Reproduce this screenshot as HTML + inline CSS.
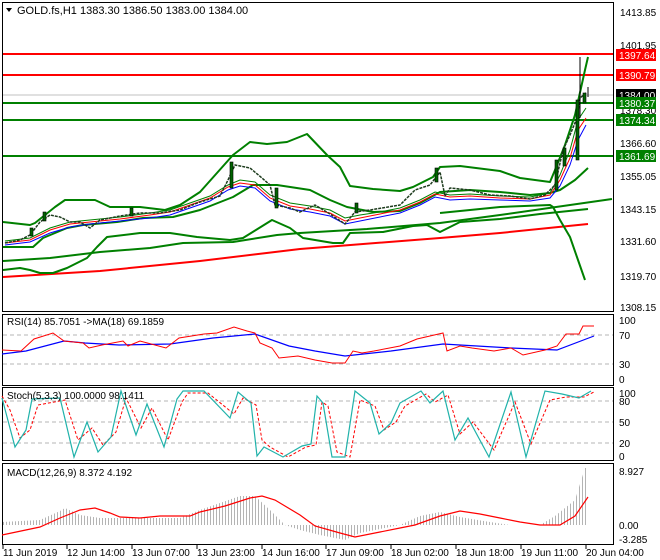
<!DOCTYPE html>
<html><head><meta charset="utf-8"><style>
html,body{margin:0;padding:0;background:#fff;}
svg{display:block;font-family:"Liberation Sans",sans-serif;}
</style></head><body>
<svg width="660" height="560" viewBox="0 0 660 560" xmlns="http://www.w3.org/2000/svg">
<defs>
<pattern id="hist" width="3" height="10" patternUnits="userSpaceOnUse"><rect x="0" y="0" width="1" height="10" fill="#b4b4b4"/></pattern>
</defs>
<rect width="660" height="560" fill="#fff"/>
<g fill="none" stroke="#000" stroke-width="1">
<rect x="2.5" y="2.5" width="611" height="309"/>
<rect x="2.5" y="314.5" width="611" height="71"/>
<rect x="2.5" y="387.5" width="611" height="73"/>
<rect x="2.5" y="463.5" width="611" height="81"/>
</g>
<line x1="3" y1="95" x2="613" y2="95" stroke="#c0c0c0" stroke-width="1"/>
<line x1="3" y1="54" x2="613" y2="54" stroke="#f00" stroke-width="2"/>
<line x1="3" y1="75" x2="613" y2="75" stroke="#f00" stroke-width="2"/>
<line x1="3" y1="103" x2="613" y2="103" stroke="#008000" stroke-width="2"/>
<line x1="3" y1="120" x2="613" y2="120" stroke="#008000" stroke-width="2"/>
<line x1="3" y1="156" x2="613" y2="156" stroke="#008000" stroke-width="2"/>
<g fill="none" stroke-width="2" stroke-linejoin="round">
<polyline stroke="#f00" points="3,277 100,271 200,261 300,249 440,238 500,233 588,224"/>
<polyline stroke="#008000" points="3,222 30,225 35,223 55,207 65,200 95,200 110,207 140,207 165,210 180,205 200,192 233,155 250,142 267,144 287,142 307,134 327,155 340,167 350,186 373,189 400,191 413,187 433,177 440,167 460,166 500,171 520,178 550,182 555,170 565,145 575,115 585,70 588,57"/>
<polyline stroke="#008000" points="3,247 33,247 43,238 67,228 83,225 117,222 143,218 173,217 200,210 233,197 253,185 277,185 310,190 330,200 347,207 373,212 400,211 420,203 440,192 470,190 500,192 530,195 550,193 560,190 575,180 588,168"/>
<polyline stroke="#008000" points="3,261 50,258 100,252 150,248 183,243 233,242 277,235 300,233 367,229 440,223 500,215 612,199"/>
<polyline stroke="#008000" points="3,270 20,268 30,270 40,273 53,273 67,268 87,258 97,247 107,237 140,233 170,233 197,237 230,240 243,238 272,220 290,228 303,238 333,243 343,243 350,233 383,232 413,226 427,225 440,232 460,222 500,219 540,214 588,209"/>
<polyline stroke="#008000" points="440,213 500,207 550,205 553,207 560,220 570,237 578,260 585,280"/>
</g>
<g fill="none" stroke-width="1">
<polyline stroke="#008000" points="5,241 30,238 50,228 70,222 90,220 120,217 150,213 170,210 190,203 210,196 228,185 240,180 255,182 270,195 290,203 310,206 330,210 345,218 360,215 380,212 400,208 420,200 435,192 450,195 470,194 500,196 530,197 550,193 560,175 570,150 578,120 586,108"/>
<polyline stroke="#f00" points="5,243 30,240 50,230 70,224 90,222 120,219 150,215 170,212 190,205 210,198 228,187 240,183 255,185 270,198 290,206 310,209 330,213 345,221 360,218 380,214 400,210 420,202 435,194 450,197 470,196 500,198 530,199 550,195 560,180 570,158 578,130 586,118"/>
<polyline stroke="#00f" points="5,245 30,242 50,233 70,227 90,224 120,221 150,218 170,215 190,208 210,201 228,190 240,186 255,188 270,201 290,209 310,212 330,216 345,224 360,221 380,217 400,213 420,205 435,197 450,200 470,199 500,200 530,201 550,198 560,186 570,165 578,140 586,125"/>
</g>
<polyline fill="none" stroke="#1e3c1e" stroke-width="1.5" stroke-dasharray="3,1" stroke-linejoin="round" points="5,243 20,240 30,235 40,222 50,215 60,217 70,222 80,222 90,228 100,220 120,216 140,213 160,213 180,210 200,202 220,196 228,180 235,165 250,168 262,178 270,185 275,205 290,208 300,212 315,205 330,214 345,224 355,212 370,210 400,205 415,190 430,185 440,172 445,196 450,188 470,190 490,195 510,196 530,199 545,195 555,185 563,150 570,135 577,118 580,98 586,93"/>
<g fill="#006400" stroke="#000" stroke-width="0.6">
<rect x="30" y="228" width="3" height="8"/><rect x="43" y="212" width="3" height="9"/><rect x="130" y="208" width="3" height="8"/><rect x="230" y="162" width="3" height="26"/><rect x="275" y="188" width="3" height="20"/><rect x="355" y="203" width="3" height="10"/><rect x="435" y="168" width="3" height="14"/><rect x="555" y="160" width="3" height="30"/><rect x="563" y="148" width="3" height="18"/><rect x="576" y="100" width="3" height="60"/><rect x="583" y="93" width="3" height="10"/>
</g>
<line x1="580" y1="57" x2="580" y2="118" stroke="#000" stroke-width="1"/>
<line x1="588" y1="87" x2="588" y2="97" stroke="#000" stroke-width="1"/>
<polygon points="6,8 12,8 9,12" fill="#000"/>
<text x="17" y="14" font-size="11" fill="#000">GOLD.fs,H1  1383.30 1386.50 1383.00 1384.00</text>
<g font-size="10" fill="#000">
<text x="620" y="16">1413.85</text>
<text x="620" y="49">1401.95</text>
<text x="620" y="114">1378.30</text>
<text x="620" y="147">1366.60</text>
<text x="620" y="180">1355.05</text>
<text x="620" y="213">1343.15</text>
<text x="620" y="245">1331.60</text>
<text x="620" y="280">1319.70</text>
<text x="620" y="311">1308.15</text>
</g>
<rect x="616" y="49" width="40" height="12" fill="#f00"/><text x="619" y="59" font-size="10" fill="#fff">1397.64</text>
<rect x="616" y="69" width="40" height="12" fill="#f00"/><text x="619" y="79" font-size="10" fill="#fff">1390.79</text>
<rect x="616" y="89" width="40" height="12" fill="#000"/><text x="619" y="99" font-size="10" fill="#fff">1384.00</text>
<rect x="616" y="97" width="40" height="12" fill="#008000"/><text x="619" y="107" font-size="10" fill="#fff">1380.37</text>
<rect x="616" y="114" width="40" height="12" fill="#008000"/><text x="619" y="124" font-size="10" fill="#fff">1374.34</text>
<rect x="616" y="150" width="40" height="12" fill="#008000"/><text x="619" y="160" font-size="10" fill="#fff">1361.69</text>
<g stroke="#b4b4b4" stroke-dasharray="4,3" stroke-width="1">
<line x1="3" y1="335" x2="613" y2="335"/><line x1="3" y1="364" x2="613" y2="364"/>
<line x1="3" y1="401" x2="613" y2="401"/><line x1="3" y1="422" x2="613" y2="422"/><line x1="3" y1="443" x2="613" y2="443"/>
</g>
<text x="7" y="325" font-size="10">RSI(14) 85.7051  -&gt;MA(18) 69.1859</text>
<polyline fill="none" stroke="#00f" stroke-width="1.2" points="2,354 26,351 64,341 85,343 119,345 170,344 213,338 255,334 289,346 315,351 345,356 391,351 443,344 511,348 557,350 594,336"/>
<polyline fill="none" stroke="#f00" stroke-width="1" points="2,350 21,351 34,339 53,333 64,341 83,343 89,348 102,345 123,341 128,346 140,341 166,348 179,338 204,334 217,333 234,327 247,331 255,333 260,343 272,348 279,358 298,356 315,360 332,363 345,363 353,351 362,353 374,351 400,346 417,339 443,333 447,351 460,346 472,348 494,351 511,348 523,355 545,350 557,346 566,334 579,334 583,326 594,326"/>
<g font-size="10"><text x="619" y="324">100</text><text x="619" y="339">70</text><text x="619" y="368">30</text><text x="619" y="383">0</text></g>
<polyline fill="none" stroke="#f00" stroke-width="1" stroke-dasharray="3,2" points="2,396 10,410 20,438 30,430 38,405 65,400 78,440 92,428 103,445 116,432 126,398 141,428 152,408 168,440 182,402 188,393 208,393 234,414 243,398 256,405 262,440 270,447 288,457 306,447 316,445 322,402 328,406 337,452 350,457 360,400 375,406 384,430 396,422 405,406 426,394 435,402 448,395 460,434 473,422 494,450 515,402 531,444 550,400 566,397 584,397 594,392"/>
<polyline fill="none" stroke="#20b2aa" stroke-width="1.2" points="2,398 15,447 26,430 32,399 60,398 74,457 87,422 98,452 111,437 121,391 136,435 147,404 164,447 177,399 183,391 204,391 230,418 238,392 251,403 257,456 264,447 283,457 302,446 311,444 317,396 323,403 332,457 345,457 355,391 370,403 379,434 391,423 400,403 421,391 430,403 443,391 455,440 468,418 489,457 511,392 526,457 545,391 562,394 579,398 591,391"/>
<text x="7" y="399" font-size="10">Stoch(5,3,3) 100.0000 98.1411</text>
<g font-size="10"><text x="619" y="397">100</text><text x="619" y="405">80</text><text x="619" y="426">50</text><text x="619" y="447">20</text><text x="619" y="460">0</text></g>
<polygon fill="url(#hist)" points="2,525 2,522 40,520 60,511 65,508 80,515 100,518 180,518 200,510 240,496 255,496 270,510 285,525 300,530 320,535 345,540 360,533 400,525 420,516 440,512 460,517 490,522 510,525 540,525 555,516 575,500 585,468 588,468 588,525"/>
<polyline fill="none" stroke="#f00" stroke-width="1.2" points="2,535 40,527 60,518 80,510 95,508 110,513 120,517 140,518 160,516 190,516 200,512 225,506 250,498 262,496 275,500 300,515 315,526 340,533 355,537 380,532 400,528 415,525 440,516 460,511 480,514 500,518 520,522 540,525 560,525 575,516 588,497"/>
<text x="7" y="476" font-size="10">MACD(12,26,9) 8.372 4.192</text>
<g font-size="10"><text x="619" y="475">8.927</text><text x="619" y="529">0.00</text><text x="619" y="543">-3.285</text></g>
<g stroke="#000" stroke-width="1">
<line x1="3" y1="545" x2="3" y2="549"/><line x1="67" y1="545" x2="67" y2="549"/><line x1="132" y1="545" x2="132" y2="549"/><line x1="197" y1="545" x2="197" y2="549"/><line x1="262" y1="545" x2="262" y2="549"/><line x1="326" y1="545" x2="326" y2="549"/><line x1="391" y1="545" x2="391" y2="549"/><line x1="456" y1="545" x2="456" y2="549"/><line x1="521" y1="545" x2="521" y2="549"/><line x1="586" y1="545" x2="586" y2="549"/>
</g>
<g font-size="10">
<text x="3" y="556">11 Jun 2019</text><text x="67" y="556">12 Jun 14:00</text><text x="132" y="556">13 Jun 07:00</text><text x="197" y="556">13 Jun 23:00</text><text x="262" y="556">14 Jun 16:00</text><text x="326" y="556">17 Jun 09:00</text><text x="391" y="556">18 Jun 02:00</text><text x="456" y="556">18 Jun 18:00</text><text x="521" y="556">19 Jun 11:00</text><text x="586" y="556">20 Jun 04:00</text>
</g>
</svg>
</body></html>
